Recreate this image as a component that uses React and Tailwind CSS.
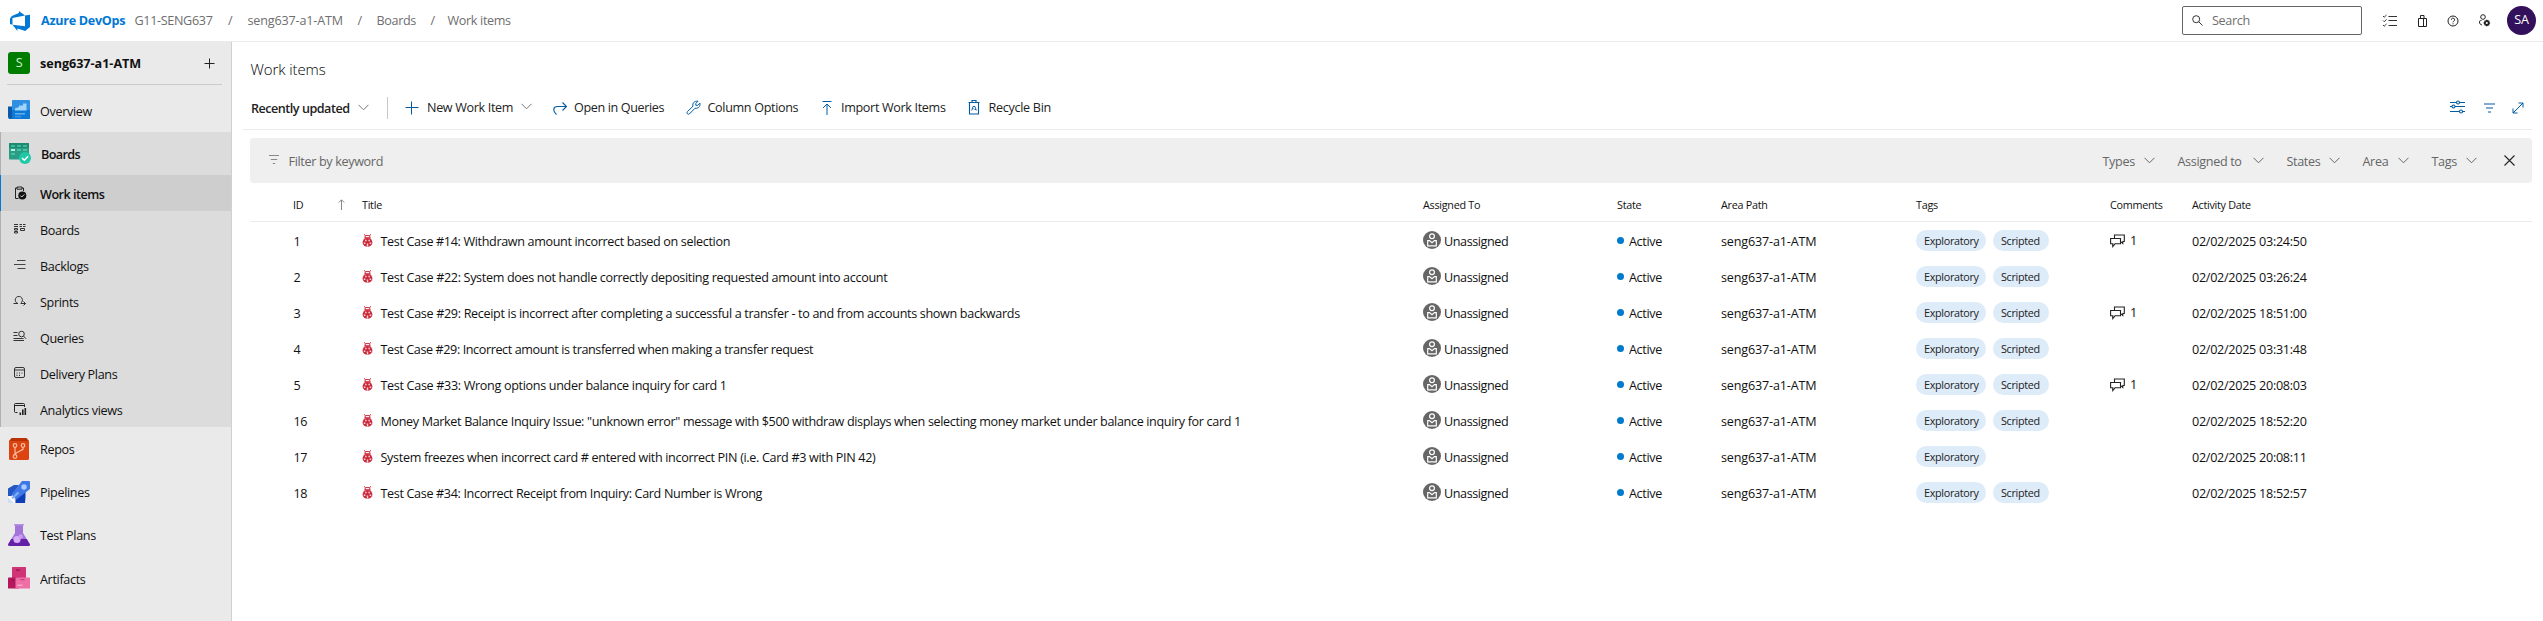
import React from 'react';

const Chevron = ({ className = '' }) => (
  <svg className={`h-[7px] w-[11px] shrink-0 ${className}`} viewBox="0 0 11 7" fill="none" stroke="currentColor" strokeWidth="1">
    <path d="M0.5 0.8 5.5 5.8 10.5 0.8" />
  </svg>
);

const Logo = () => (
  <svg className="size-[20px] shrink-0 fill-[#0078d4]" viewBox="0 0 24 24">
    <path d="M0 8.877L2.247 5.91l8.405-3.416V.022l7.37 5.393L2.966 8.338v8.225L0 15.707zm24-4.45v14.651l-5.753 4.9-9.303-3.057v3.056l-5.978-7.416 15.057 1.798V5.415z" />
  </svg>
);

const OverviewIcon = () => (
  <svg className="h-[20px] w-[22px]" viewBox="0 0 22 20">
    <path d="M0 6.500h5V19H2a2 2 0 0 1-2-2z" fill="#0a5aa8" />
    <path d="M4 1a1 1 0 0 1 1-1h16a1 1 0 0 1 1 1v17a1 1 0 0 1-1 1H2.500A1.500 1.500 0 0 0 4 17.500z" fill="#2f8fe0" />
    <path d="M4 10h18v8a1 1 0 0 1-1 1H3.500q.5-.5.5-1.500z" fill="#0f78d4" />
    <path d="M7 10.500V8.500l4-1.500V5.500h4V3.500h3.500v7z" fill="#9fd4fb" />
    <path d="M7 13h10v1.600H7z" fill="#5eb0f0" />
    <path d="M7 15.800h6v1.600H7z" fill="#3b97e3" />
  </svg>
);

const BoardsIcon = () => (
  <svg className="h-[21px] w-[22px]" viewBox="0 0 22 21">
    <rect width="20" height="16.500" rx="0.800" fill="#2a9d84" />
    <rect width="20" height="5" rx="0.800" fill="#1f8a72" />
    <path d="M2 2h4v2H2zM8 2h4v2H8zM14 2h4v2h-4z" fill="#3fb89c" />
    <path d="M2 6h4v2H2z" fill="#b8f5e2" />
    <path d="M8 6h4v2H8zM2 10h4v2H2zM14 6h4v2h-4z" fill="#45c4a5" />
    <circle cx="16" cy="15" r="6" fill="#1fc9a8" />
    <path d="M13 15l2.300 2.300L19.200 13.200" fill="none" stroke="#fff" strokeWidth="1.500" />
  </svg>
);

const ReposIcon = () => (
  <svg className="h-[22px] w-[22px]" viewBox="0 0 22 22">
    <path d="M3.500 0h15L21 3H1z" fill="#b93204" />
    <path d="M1 3h20v17.500a1.500 1.500 0 0 1-1.500 1.500h-17A1.500 1.500 0 0 1 1 20.500z" fill="#dd4310" />
    <g fill="none" stroke="#f9c0a4" strokeWidth="1.200">
      <circle cx="7" cy="7.500" r="1.800" />
      <circle cx="15" cy="7.500" r="1.800" />
      <circle cx="7" cy="18.500" r="1.800" />
      <path d="M7 9.300v7.400M15 9.300v2L7.300 15.500" />
    </g>
  </svg>
);

const PipelinesIcon = () => (
  <svg className="size-[22px]" viewBox="0 0 22 22">
    <path d="M0 7.500 6 4h5L3.500 15H0z" fill="#2456c4" />
    <path d="M7.500 17.500 17.500 10v6L17 22H7.500z" fill="#0f3fb8" />
    <path d="M14 0h7a1 1 0 0 1 1 1v7L8.500 18.500 3.500 13.500z" fill="#3f78e6" />
    <path d="M9.500 10.500l2 2L4.500 18l-1-1z" fill="#7ea9f5" />
    <circle cx="16" cy="6" r="2.700" fill="#a9cbfb" />
    <path d="M0 16l6 6H0z" fill="#cfdffa" />
    <path d="M1.500 15l5.500 5.500-1 1.500-6-6z" fill="#fff" />
  </svg>
);

const TestPlansIcon = () => (
  <svg className="size-[22px]" viewBox="0 0 22 22">
    <path d="M7 0h8v9l6.700 11a1.300 1.300 0 0 1-1.200 2h-19a1.300 1.300 0 0 1-1.200-2L7 9z" fill="#a375d8" />
    <path d="M3.200 15h15.600l2.900 5a1.300 1.300 0 0 1-1.200 2h-19a1.300 1.300 0 0 1-1.200-2z" fill="#641fa8" />
    <rect x="6" width="10" height="1.500" rx="0.500" fill="#b592e2" />
    <circle cx="9" cy="15.500" r="3.600" fill="#d6adf5" />
    <circle cx="12.700" cy="12.500" r="2.200" fill="#c89bf0" />
  </svg>
);

const ArtifactsIcon = () => (
  <svg className="h-[22px] w-[22px]" viewBox="0 0 22 22">
    <rect x="4" width="14" height="11" rx="0.600" fill="#d13377" />
    <path d="M8 2.500h4v1.200H8z" fill="#8f1046" />
    <rect y="10.500" width="11" height="11" rx="0.600" fill="#b5175c" />
    <path d="M2.500 12.500h4v1.200h-4z" fill="#8f1046" />
    <rect x="7.500" y="10.500" width="14.500" height="11" rx="0.600" fill="#ee6fa6" />
    <path d="M12.500 12h4v1.200h-4z" fill="#c93a7a" />
    <path d="M9.500 17.500h5v1.500h-5z" fill="#f6a6c8" />
  </svg>
);

const small = 'h-[14px] w-[14px]';
const SubIcons = {
  work: (
    <svg className={small} viewBox="0 0 14 14">
      <path d="M4 2H2.500v10.500h3M9 2h1.500v3" fill="none" stroke="#222" strokeWidth="1" />
      <path d="M4 1h5v2.200H4z" fill="none" stroke="#222" strokeWidth="1" />
      <circle cx="9.300" cy="9.500" r="4" fill="#111" />
      <path d="M7.400 9.600l1.400 1.400 2.500-2.600" fill="none" stroke="#ddd" strokeWidth="1" />
    </svg>
  ),
  boards: (
    <svg className={small} viewBox="0 0 14 14" fill="none" stroke="#333" strokeWidth="1">
      <path d="M1 2.500h4M6.500 2.500H9M10 2.500h2.500M1 4.500h4M6.500 4.500H9M10 4.500h2.500M1.500 6.500h3v1.500h-3zM7.500 6.500H11.500v2h-4zM1.500 9.500h3v1.500h-3z" />
    </svg>
  ),
  backlogs: (
    <svg className={small} viewBox="0 0 14 14" fill="none" stroke="#444" strokeWidth="1">
      <path d="M4 2.500h8.500M1 6.500h11.500M4.500 10.500h8" />
    </svg>
  ),
  sprints: (
    <svg className={small} viewBox="0 0 14 14" fill="none" stroke="#333" strokeWidth="1">
      <path d="M0.500 9.500h4.500M5 9.500a3.600 3.600 0 1 1 3.600-1.200L7.800 9.500h4.700M10.500 7.500l2 2-2 2" />
    </svg>
  ),
  queries: (
    <svg className={small} viewBox="0 0 14 14" fill="none" stroke="#333" strokeWidth="1">
      <path d="M0.500 2.500h4M0.500 5.500h4M0.500 8.500h10M0.500 10.500h10.500" />
      <circle cx="8.500" cy="4" r="2.800" />
      <path d="M10.500 6l2.500 2.800" />
    </svg>
  ),
  plans: (
    <svg className={small} viewBox="0 0 14 14" fill="none" stroke="#333" strokeWidth="1">
      <rect x="1.500" y="1.500" width="10" height="10" rx="1.500" />
      <path d="M1.500 4h10" />
      <path d="M3.500 7h1M6 7h1M8.500 7h1M3.500 9.300h1M6 9.300h1" strokeWidth="1.200" />
    </svg>
  ),
  analytics: (
    <svg className={small} viewBox="0 0 14 14" fill="none" stroke="#222" strokeWidth="1">
      <path d="M4.500 10.500h-2a1 1 0 0 1-1-1v-7a1 1 0 0 1 1-1h8a1 1 0 0 1 1 1V5M1.500 3.500h10" />
      <path d="M7.300 13v-2.500M9.800 13V7.500M12.300 13V6" strokeWidth="1.600" />
    </svg>
  ),
};

const Bug = () => (
  <svg className="h-[13px] w-[11px] shrink-0" viewBox="0 0 11 13">
    <path d="M2 0.400 3.600 1.600h3.800L9 0.400M3.200 1.800v2.400M7.800 1.800v2.400" fill="none" stroke="#cc293d" strokeWidth="1" />
    <path d="M3 3.200h5l1 1.300H2z" fill="#cc293d" />
    <ellipse cx="5.500" cy="8.400" rx="4.900" ry="4.300" fill="#cc293d" />
    <path d="M3.100 5.800h1.500v1.400H3.100zM6.400 5.800h1.500v1.400H6.400zM1.800 8.600h1.600v1.500H1.800zM7.600 8.600h1.600v1.500H7.600zM4.800 9.600h1.400v3H4.800z" fill="#fff" fillOpacity="0.800" />
  </svg>
);

const Person = () => (
  <svg className="size-[18px] shrink-0" viewBox="0 0 18 18">
    <circle cx="9" cy="9" r="9" fill="#666" />
    <g fill="none" stroke="#fff" strokeWidth="1.200">
      <circle cx="9" cy="5.200" r="2.400" />
      <path d="M6.500 9.600H4.700v5.200h8.600V9.600h-1.800L9 11.800z" />
    </g>
  </svg>
);

const CommentIcon = () => (
  <svg className="mt-[2px] h-[14px] w-[15px] shrink-0" viewBox="0 0 15 14" fill="none" stroke="#222" strokeWidth="1.100">
    <path d="M4.500 4.500V1h9.800v6.500h-1.500v2L11 7.800" />
    <path d="M0.600 4.500h9.900v5.300H5L2.800 12.500V9.800H0.600z" />
  </svg>
);

const Pill = ({ children, className }) => (
  <span className={`flex h-[21px] items-center rounded-full bg-[#deebf8] pl-[8px] text-[10.8px] tracking-[-0.31px] text-[#222] ${className}`}>
    <span className="pt-px">{children}</span>
  </span>
);

const rows = [
  { id: 1, title: 'Test Case #14: Withdrawn amount incorrect based on selection', fit: 'tracking-[-0.35px]', scripted: true, comments: 1, date: '02/02/2025 03:24:50' },
  { id: 2, title: 'Test Case #22: System does not handle correctly depositing requested amount into account', fit: 'tracking-[-0.34px]', scripted: true, date: '02/02/2025 03:26:24' },
  { id: 3, title: 'Test Case #29: Receipt is incorrect after completing a successful a transfer - to and from accounts shown backwards', fit: 'tracking-[-0.335px]', scripted: true, comments: 1, date: '02/02/2025 18:51:00' },
  { id: 4, title: 'Test Case #29: Incorrect amount is transferred when making a transfer request', fit: 'tracking-[-0.4px]', scripted: true, date: '02/02/2025 03:31:48' },
  { id: 5, title: 'Test Case #33: Wrong options under balance inquiry for card 1', fit: 'tracking-[-0.33px]', scripted: true, comments: 1, date: '02/02/2025 20:08:03' },
  { id: 16, title: 'Money Market Balance Inquiry Issue: "unknown error" message with $500 withdraw displays when selecting money market under balance inquiry for card 1', fit: 'tracking-[-0.35px]', scripted: true, date: '02/02/2025 18:52:20' },
  { id: 17, title: 'System freezes when incorrect card # entered with incorrect PIN (i.e. Card #3 with PIN 42)', fit: 'tracking-[-0.33px]', scripted: false, date: '02/02/2025 20:08:11' },
  { id: 18, title: 'Test Case #34: Incorrect Receipt from Inquiry: Card Number is Wrong', fit: 'tracking-[-0.35px]', scripted: true, date: '02/02/2025 18:52:57' },
];

const columns = 'grid grid-cols-[43px_69px_1061px_194px_104px_195px_194px_82px_1fr]';

const NavItem = ({ icon, label, className = '' }) => (
  <div className={`flex h-[43.2px] items-center pl-[8px] ${className}`}>
    <span className="flex w-[32px] items-center">{icon}</span>
    <span className="pt-[3px]">{label}</span>
  </div>
);

const SubItem = ({ icon, label, active }) => (
  <div className={`flex h-[36px] items-center border-l pl-[12px] ${active ? 'border-[#0078d4] bg-[#cecece] font-semibold tracking-[-0.5px]' : 'border-[#b0b0b0]'}`}>
    <span className="flex w-[27px] items-center pt-px">{SubIcons[icon]}</span>
    <span className="pt-[4px]">{label}</span>
  </div>
);

const Sidebar = () => (
  <nav className="flex w-[232px] shrink-0 flex-col border-r border-[#d0d0d0] bg-[#eaeaea] text-[#111]">
    <div className="flex h-[46.6px] flex-col">
      <div className="flex h-[42px] items-center pl-[8px]">
        <span className="flex size-[22px] items-center justify-center rounded-[3px] bg-[#007d00] text-[12.6px] text-[#d5f0d5]">S</span>
        <span className="ml-[10px] w-[163px] pt-px font-bold tracking-[-0.02px]">seng637-a1-ATM</span>
        <svg className="ml-[1px] size-[11px]" viewBox="0 0 11 11" stroke="#222" strokeWidth="1">
          <path d="M5.500 0.500v10M0.500 5.500h10" />
        </svg>
      </div>
      <div className="ml-[7px] w-[215px] border-t border-[#cbcbcb]" />
    </div>
    <NavItem icon={<OverviewIcon />} label="Overview" />
    <div className="bg-[#dcdcdc]">
      <NavItem icon={<BoardsIcon />} label="Boards" className="border-l border-[#b0b0b0] pl-[7px] font-semibold tracking-[-0.6px]" />
      <SubItem icon="work" label="Work items" active />
      <SubItem icon="boards" label="Boards" />
      <SubItem icon="backlogs" label="Backlogs" />
      <SubItem icon="sprints" label="Sprints" />
      <SubItem icon="queries" label="Queries" />
      <SubItem icon="plans" label="Delivery Plans" />
      <SubItem icon="analytics" label="Analytics views" />
    </div>
    <NavItem icon={<ReposIcon />} label="Repos" />
    <NavItem icon={<PipelinesIcon />} label="Pipelines" />
    <NavItem icon={<TestPlansIcon />} label="Test Plans" />
    <NavItem icon={<ArtifactsIcon />} label="Artifacts" />
  </nav>
);

const Header = () => (
  <header className="flex h-[42px] shrink-0 items-center border-b border-[#eaeaea] pl-[10px] text-[#6e6e6e]">
    <Logo />
    <span className="ml-[11px] w-[93.500px] font-bold tracking-[-0.3px] text-[#0078d4]">Azure DevOps</span>
    <span className="w-[93.500px]">G11-SENG637</span>
    <span className="w-[19.500px]">/</span>
    <span className="w-[110px] tracking-[-0.17px]">seng637-a1-ATM</span>
    <span className="w-[19px]">/</span>
    <span className="w-[54px]">Boards</span>
    <span className="w-[17px]">/</span>
    <span>Work items</span>
    <div className="ml-auto flex h-[29px] w-[180px] items-center rounded-[2px] border border-[#666]">
      <svg className="ml-[9px] size-[11px]" viewBox="0 0 11 11" fill="none" stroke="#333" strokeWidth="1">
        <circle cx="4.200" cy="4.200" r="3.500" />
        <path d="M6.800 6.800l3.700 3.700" />
      </svg>
      <span className="ml-[9px]">Search</span>
    </div>
    <svg className="ml-[20px] h-[13px] w-[16px]" viewBox="0 0 16 13" fill="none" stroke="#333" strokeWidth="1">
      <path d="M6.500 2.500H15M6.500 6.500H15M6.500 11.500H15M1 2l1.200 1.200L4.500 1M1 6.500l1.200 1.200L4.500 5.500M1 11l1.200 1.200L4.500 10" />
    </svg>
    <svg className="ml-[19px] h-[14px] w-[11px]" viewBox="0 0 11 14" fill="none" stroke="#222" strokeWidth="1">
      <path d="M1.500 4.500h8v8h-8zM3.500 4.500V1.500h3.500v3M6.500 4.500V12.500" />
    </svg>
    <svg className="ml-[19px] size-[12px]" viewBox="0 0 12 12" fill="none" stroke="#222" strokeWidth="1">
      <circle cx="6" cy="6" r="5" />
      <path d="M4.400 4.800a1.600 1.600 0 1 1 2.400 1.300q-.8.500-.8 1.300M6 8.300v1" />
    </svg>
    <svg className="ml-[19px] size-[13px]" viewBox="0 0 13 13" fill="none" stroke="#222" strokeWidth="1">
      <circle cx="5" cy="3" r="2.300" />
      <path d="M3.500 6.500H2.500A1.500 1.500 0 0 0 1.500 8C1.500 9.500 2.500 11 4 11" />
      <circle cx="8.800" cy="9" r="2" strokeWidth="1.800" />
      <path d="M8.800 5.600v6.800M5.400 9h6.800M6.500 6.700l4.600 4.600M11.100 6.700l-4.600 4.600" strokeWidth="0.900" />
      <circle cx="8.800" cy="9" r="1" fill="#fff" stroke="none" />
    </svg>
    <span className="mr-[7px] ml-[16px] flex size-[29px] items-center justify-center rounded-full bg-[#32105c] pb-px tracking-[-0.3px] text-white">
      SA
    </span>
  </header>
);

const Toolbar = () => (
  <div className="ml-[11px] flex h-[35px] items-start border-b border-[#eaeaea]">
    <div className="flex h-[25px] w-full items-center pl-[8px] text-[#222]">
      <span className="w-[107px] pt-[2px] font-semibold tracking-[-0.49px]">Recently updated</span>
      <Chevron className="text-[#777]" />
      <span className="ml-[18px] h-[22px] w-px bg-[#c8c8c8]" />
      <svg className="ml-[17px] size-[14px]" viewBox="0 0 14 14" stroke="#005ba1" strokeWidth="1">
        <path d="M6.500 0.500v13M0.500 6.500h13" />
      </svg>
      <span className="ml-[8px] w-[94px]">New Work Item</span>
      <Chevron className="-mt-[2px] text-[#777]" />
      <svg className="ml-[21px] h-[14px] w-[14px]" viewBox="0 0 14 14" fill="none" stroke="#005ba1" strokeWidth="1.100">
        <path d="M3.500 13.500C-0.500 10 0 5.500 4.500 5.500h9M9.500 1.500l4 4-4 4" />
      </svg>
      <span className="ml-[7px] w-[112px] tracking-[-0.37px]">Open in Queries</span>
      <svg className="h-[15px] w-[15px]" viewBox="0 0 15 15" fill="none" stroke="#005ba1" strokeWidth="1">
        <path d="M1.300 11.800 7 6.200C6.200 3 8.500 0.700 12 1.200L9.800 3.500v1.800h1.900L14 3.200c0.500 3.500-2 5.600-4.900 5L3.400 13.900A1.500 1.500 0 0 1 1.300 11.800z" />
      </svg>
      <span className="ml-[6.500px] w-[114px]">Column Options</span>
      <svg className="h-[14px] w-[10px]" viewBox="0 0 10 14" fill="none" stroke="#005ba1" strokeWidth="1">
        <path d="M0.500 0.500h9M5 14V3.500M1 7l4-4 4 4" />
      </svg>
      <span className="ml-[9.500px] w-[127px]">Import Work Items</span>
      <svg className="h-[15px] w-[12px]" viewBox="0 0 12 15" fill="none" stroke="#005ba1" strokeWidth="1.100">
        <path d="M0.500 2.500h11M4 2.500v-2h4v2M1.500 2.500V14h9V2.500" />
        <path d="M3.700 10.500 5 6.500h2l1.300 4M4.300 8.800h1.400M6.500 9.500h1.600" strokeWidth="0.900" />
      </svg>
      <span className="ml-[8.500px] tracking-[-0.3px]">Recycle Bin</span>
      <div className="mr-[8px] ml-auto flex items-center">
        <svg className="-mt-[2px] h-[14px] w-[15px]" viewBox="0 0 15 14" fill="none" stroke="#005ba1" strokeWidth="1.100">
          <path d="M0 2.500h6.500M9.500 2.500H15M0 6.500h2M5 6.500h10M0 11.500h9.500M12.500 11.500H15" />
          <circle cx="8" cy="2.500" r="1.500" />
          <circle cx="3.500" cy="6.500" r="1.500" />
          <circle cx="11" cy="11.500" r="1.500" />
        </svg>
        <svg className="ml-[19px] h-[10px] w-[11px]" viewBox="0 0 11 10" stroke="#005ba1" strokeWidth="1.100">
          <path d="M0 1h11M2 5h7M4 9h3" />
        </svg>
        <svg className="ml-[17px] size-[12px]" viewBox="0 0 12 12" fill="none" stroke="#005ba1" strokeWidth="1">
          <path d="M1 11 11 1M6.500 1H11v4.500M1 6.500V11h4.500" />
        </svg>
      </div>
    </div>
  </div>
);

const filters = [
  ['Types', 'w-[41px]', 'mr-[23px]'],
  ['Assigned to', 'w-[75px]', 'mr-[23px]'],
  ['States', 'w-[42px]', 'mr-[23px]'],
  ['Area', 'w-[35px]', 'mr-[23px]'],
  ['Tags', 'w-[34px]', 'mr-[27px]'],
];

const FilterBar = () => (
  <div className="mt-[8px] ml-[18px] flex h-[45px] items-center rounded-[4px] bg-[#efefef] pl-[19px] text-[#666]">
    <svg className="-mt-[2px] h-[9px] w-[10px]" viewBox="0 0 10 9" stroke="#888" strokeWidth="1">
      <path d="M0 0.500h10M1.800 4.500h6.400M3.800 8.500h2.400" />
    </svg>
    <span className="mr-auto ml-[9.500px] pt-[2px]">Filter by keyword</span>
    {filters.map(([label, width, gap]) => (
      <div key={label} className={`flex items-center ${gap}`}>
        <span className={`pt-[2px] ${width}`}>{label}</span>
        <Chevron className="-mt-px" />
      </div>
    ))}
    <svg className="mr-[17.500px] size-[11px]" viewBox="0 0 11 11" stroke="#222" strokeWidth="1.100">
      <path d="M0.500 0.500l10 10M10.500 0.500l-10 10" />
    </svg>
  </div>
);

const Table = () => (
  <div className="ml-[18px]">
    <div className={`${columns} h-[39px] items-center border-b border-[#eaeaea] pt-[6px] text-[10.8px] tracking-[-0.28px] text-[#111]`}>
      <span />
      <span className="flex items-center">
        <span className="w-[45px]">ID</span>
        <svg className="-mt-[2px] h-[11px] w-[7px]" viewBox="0 0 7 11" fill="none" stroke="#888" strokeWidth="1">
          <path d="M3.500 11V1M0.800 3.500l2.700-2.700 2.700 2.700" />
        </svg>
      </span>
      <span>Title</span>
      <span>Assigned To</span>
      <span>State</span>
      <span>Area Path</span>
      <span>Tags</span>
      <span>Comments</span>
      <span>Activity Date</span>
    </div>
    {rows.map((r) => (
      <div key={r.id} className={`${columns} h-[36px] items-center text-[#111]`}>
        <span />
        <span className="pt-[3px] pl-[0.5px]">{r.id}</span>
        <span className="flex items-center">
          <Bug />
          <span className={`ml-[7.5px] pt-[3px] ${r.fit}`}>{r.title}</span>
        </span>
        <span className="flex items-center">
          <Person />
          <span className="ml-[3px] pt-[3px] tracking-[-0.42px]">Unassigned</span>
        </span>
        <span className="flex items-center">
          <span className="size-[7px] rounded-full bg-[#007acc]" />
          <span className="ml-[5px] pt-[3px]">Active</span>
        </span>
        <span className="pt-[3px] tracking-[-0.17px]">seng637-a1-ATM</span>
        <span className="flex items-center gap-[7px]">
          <Pill className="w-[70px]">Exploratory</Pill>
          {r.scripted && <Pill className="w-[56px]">Scripted</Pill>}
        </span>
        <span className="flex items-center">
          {r.comments && (
            <>
              <CommentIcon />
              <span className="ml-[5px] pt-[2px]">{r.comments}</span>
            </>
          )}
        </span>
        <span className="pt-[3px] tracking-[-0.28px]">{r.date}</span>
      </div>
    ))}
  </div>
);

export default function App() {
  return (
    <div className="flex h-[621px] flex-col overflow-hidden bg-white font-['Open_Sans','Noto_Sans',sans-serif] text-[12.6px] leading-[18px] tracking-[-0.34px] whitespace-nowrap">
      <Header />
      <div className="flex flex-1">
        <Sidebar />
        <main className="flex flex-1 flex-col pr-[11px]">
          <h1 className="flex h-[53px] items-center pl-[18.5px] text-[15px] font-light tracking-[-0.1px] text-[#000]">Work items</h1>
          <Toolbar />
          <FilterBar />
          <Table />
        </main>
      </div>
    </div>
  );
}
